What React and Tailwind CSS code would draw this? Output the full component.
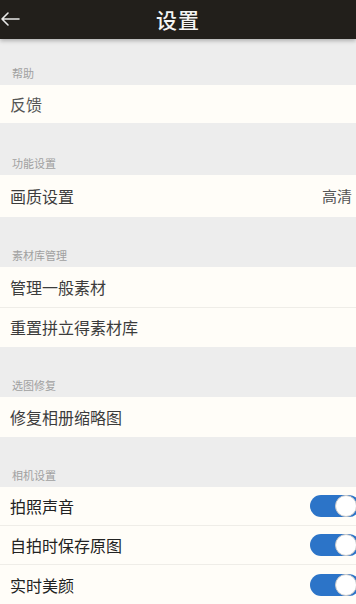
import React from "react";

const font = { fontFamily: '"Noto Sans CJK SC", "Noto Sans", sans-serif' };

function Label({ text, h }) {
  return (
    <div className={`flex items-end pl-[12px] pb-[6px] ${h}`}>
      <span className="text-[11px] leading-[12px] text-[#a0a0a0]">{text}</span>
    </div>
  );
}

function Toggle() {
  return (
    <div className="relative h-[22px] w-[50px] mr-[-8px] rounded-full bg-[#2c74c8]">
      <div className="absolute right-[3px] top-0 h-[22px] w-[22px] rounded-full bg-white border border-[#c9c9c9]" />
    </div>
  );
}

function Row({ text, h = "h-[40px]", right, border, toggle, color = "text-[#3c3c3c]" }) {
  return (
    <div className={`flex items-center justify-between bg-[#fffdf8] pl-[10px] pr-[4px] ${h} ${border ? "border-b border-[#efede8]" : ""}`}>
      <span className={`text-[16px] leading-none ${color}`}>{text}</span>
      {right && <span className="text-[15px] leading-none text-[#555]">{right}</span>}
      {toggle && <Toggle />}
    </div>
  );
}

export default function App() {
  return (
    <div style={font} className="w-[356px] h-[604px] overflow-hidden bg-[#ededed] flex flex-col">
      <div className="relative h-[39px] shrink-0 bg-[#221f1b] flex items-center justify-center shadow-[0_2px_4px_rgba(0,0,0,0.25)] z-10">
        <svg className="absolute left-0 top-[11px]" width="20" height="16" viewBox="0 0 20 16">
          <path d="M19 8H2M8 2L2 8l6 6" stroke="#e8e8e8" strokeWidth="1.6" fill="none" strokeLinecap="round" strokeLinejoin="round" />
        </svg>
        <span className="text-[21px] leading-none text-[#f4f4f4] font-medium tracking-[1px]">设置</span>
      </div>
      <Label text="帮助" h="h-[46px]" />
      <Row text="反馈" h="h-[38px]" color="text-[#555]" />
      <Label text="功能设置" h="h-[52px]" />
      <Row text="画质设置" h="h-[43px]" right="高清" />
      <Label text="素材库管理" h="h-[50px]" />
      <Row text="管理一般素材" h="h-[41px]" border />
      <Row text="重置拼立得素材库" h="h-[39px]" />
      <Label text="选图修复" h="h-[50px]" />
      <Row text="修复相册缩略图" h="h-[40px]" />
      <Label text="相机设置" h="h-[51px]" />
      <Row text="拍照声音" h="h-[39px]" border toggle color="text-[#222]" />
      <Row text="自拍时保存原图" h="h-[39px]" border toggle color="text-[#222]" />
      <Row text="实时美颜" h="h-[39px]" toggle color="text-[#222]" />
    </div>
  );
}
